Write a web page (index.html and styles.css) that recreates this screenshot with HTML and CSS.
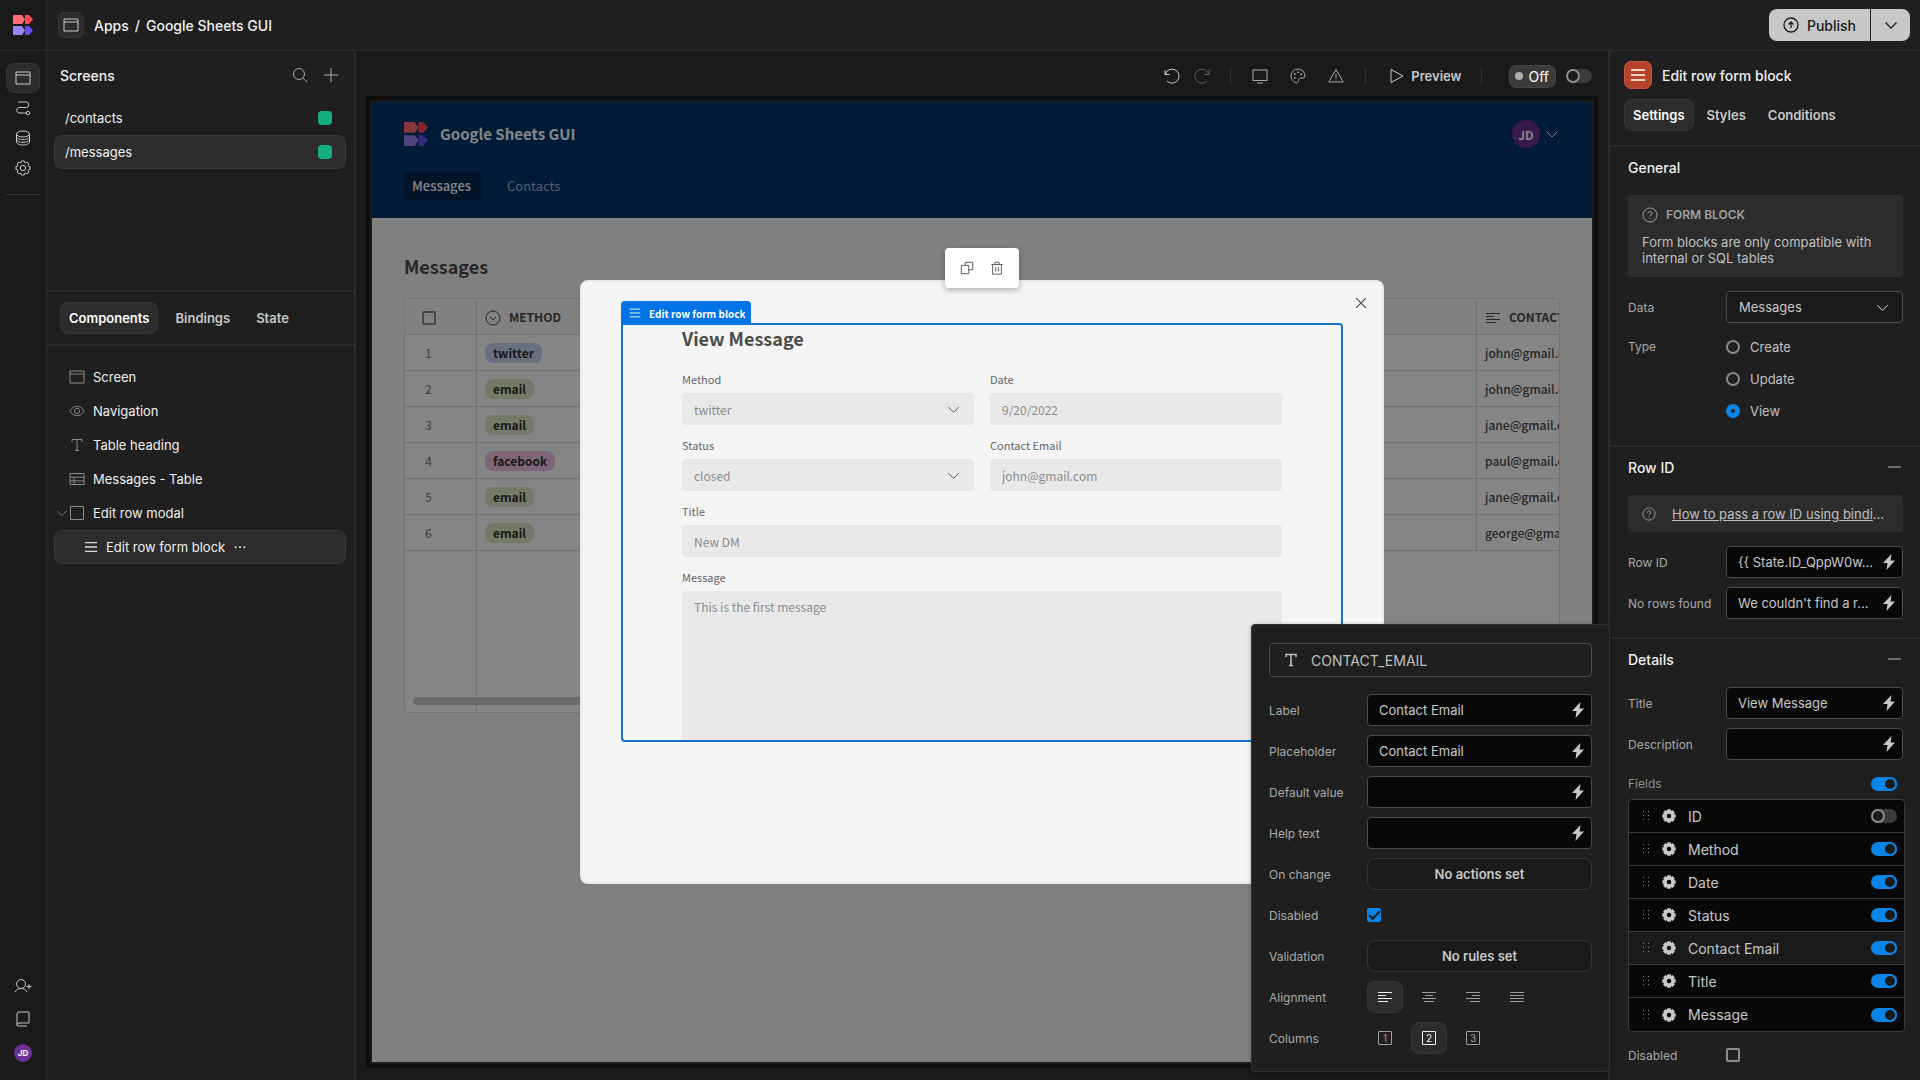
FILE: index.html
```html
<!DOCTYPE html>
<html lang="en">
<head>
  <meta charset="UTF-8">
  <meta name="viewport" content="width=device-width, initial-scale=1.0">
  <title>Google Sheets GUI</title>
  <link rel="stylesheet" href="styles.css">
</head>
<body>

  <!-- shared icons -->
  <svg class="sprite" aria-hidden="true">
    <symbol id="logo" viewBox="0 0 20 20">
      <path fill="#ff6d72" d="M0 0h9l3 4.500-3 4.500H0z"/>
      <path fill="#ff4a55" d="M12 0h4l4 4.500L16 9h-4z"/>
      <path fill="#9b83f5" d="M0 11h9l3 4.500L9 20H0z"/>
      <path fill="#6a4ff0" d="M12 11h4l4 4.500-4 4.500h-4z"/>
    </symbol>
    <symbol id="window" viewBox="0 0 16 16"><path d="M1 2h14v12H1zM1 5h14"/></symbol>
    <symbol id="flow" viewBox="0 0 16 16"><path d="M3 2h8.500a2.800 2.800 0 0 1 0 5.500H4a2.800 2.800 0 0 0 0 5.500h7"/><circle cx="13" cy="13" r="1.700"/></symbol>
    <symbol id="data" viewBox="0 0 16 16"><ellipse cx="8" cy="4" rx="6.500" ry="3"/><path d="M1.500 4v8c0 1.700 3 3 6.500 3s6.500-1.300 6.500-3V4M1.500 6.700c0 1.700 3 3 6.500 3s6.500-1.300 6.500-3M1.500 9.400c0 1.700 3 3 6.500 3s6.500-1.300 6.500-3"/></symbol>
    <symbol id="gear" viewBox="-8 -8 16 16">
      <path d="M7.090-1.250V1.250L5.550 1.700 5.120 2.720 5.900 4.130 4.130 5.900 2.720 5.120 1.700 5.550 1.250 7.090H-1.250L-1.700 5.550-2.720 5.120-4.130 5.900-5.900 4.130-5.120 2.720-5.550 1.700-7.090 1.250V-1.250L-5.550-1.700-5.120-2.720-5.900-4.130-4.130-5.900-2.720-5.120-1.700-5.550-1.250-7.090H1.250L1.700-5.550 2.720-5.120 4.130-5.900 5.900-4.130 5.120-2.720 5.550-1.700Z"/>
      <circle r="2.700"/>
    </symbol>
    <symbol id="gear-solid" viewBox="-8 -8 16 16">
      <path fill-rule="evenodd" d="M7.600-2V2L6.200 2.100 5.900 2.800 6.800 4 4 6.800 2.800 5.900 2.100 6.200 2 7.600H-2L-2.100 6.200-2.800 5.900-4 6.800-6.800 4-5.900 2.800-6.200 2.100-7.600 2V-2L-6.200-2.100-5.900-2.800-6.800-4-4-6.800-2.800-5.900-2.100-6.200-2-7.600H2L2.100-6.200 2.800-5.900 4-6.800 6.800-4 5.900-2.800 6.200-2.100ZM0-2.600A2.600 2.600 0 0 0 0 2.600 2.600 2.600 0 0 0 0-2.600Z"/>
    </symbol>
    <symbol id="user-add" viewBox="0 0 18 16"><circle cx="7" cy="6" r="4.500"/><path d="M1 14c1.300-2.200 3.500-3.500 6-3.500s4.700 1.300 6 3.500M15 6v5M12.500 8.500h5"/></symbol>
    <symbol id="book" viewBox="0 0 16 16"><path d="M2 14V3a2 2 0 0 1 2-2h10v11H4a2 2 0 0 0-2 2 1 1 0 0 0 1 1h9"/></symbol>
    <symbol id="search" viewBox="0 0 16 16"><circle cx="7" cy="7" r="5.500"/><path d="M11 11l4 4"/></symbol>
    <symbol id="plus" viewBox="0 0 16 16"><path d="M8 1v14M1 8h14"/></symbol>
    <symbol id="eye" viewBox="0 0 18 16"><path d="M1 8c2-3.500 4.800-5.300 8-5.300S15 4.500 17 8c-2 3.500-4.800 5.300-8 5.300S3 11.500 1 8z"/><circle cx="9" cy="8" r="3"/></symbol>
    <symbol id="type" viewBox="0 0 16 16"><path d="M3 5V2.500h10V5M8 2.500v11M6 13.500h4"/></symbol>
    <symbol id="table" viewBox="0 0 16 16"><path d="M1 2.500h14v11H1zM1 6.200h14M1 9.900h14M5 6.200v7.300"/></symbol>
    <symbol id="square" viewBox="0 0 16 16"><path d="M1.500 1.500h13v13h-13z"/></symbol>
    <symbol id="rows" viewBox="0 0 16 16"><path d="M1 3h14M1 8h14M1 13h14"/></symbol>
    <symbol id="chevron" viewBox="0 0 16 16"><path d="M2.500 5.500L8 11l5.500-5.500"/></symbol>
    <symbol id="dots" viewBox="0 0 16 16"><path class="solid" d="M2 7h2v2H2zM7 7h2v2H7zM12 7h2v2h-2z"/></symbol>
    <symbol id="undo" viewBox="0 0 16 16"><path d="M1 2v4.500h4.500M1.300 6.300A7 7 0 1 1 3 13"/></symbol>
    <symbol id="desktop" viewBox="0 0 16 16"><path d="M1 2h14v10.500H1zM5 15h6"/></symbol>
    <symbol id="palette" viewBox="0 0 16 16"><path d="M8 1a7 7 0 0 0-2 13.700c1.700.500 2.500-.700 2.500-2 0-1.700 1-2.700 2.500-2.700h2c1.300 0 2-.800 2-2A7 7 0 0 0 8 1z"/><path class="solid" d="M7.200 3.500h1.600v1.600H7.200zM4 5.300h1.600v1.600H4zM4 9h1.600v1.600H4zM10.500 5.300h1.600v1.600h-1.600z"/></symbol>
    <symbol id="warning" viewBox="0 0 16 16"><path d="M8 1.500L15.200 14H.8zM8 6v4.500M8 11.500v1"/></symbol>
    <symbol id="play" viewBox="0 0 16 16"><path d="M2 1.500v13L14 8z"/></symbol>
    <symbol id="upload" viewBox="0 0 16 16"><circle cx="8" cy="8" r="7"/><path d="M8 11V5M5.500 7.500L8 5l2.500 2.500"/></symbol>
    <symbol id="help" viewBox="0 0 16 16"><circle cx="8" cy="8" r="7"/><path d="M6 6.500a2 2 0 1 1 2.800 1.800c-.500.200-.8.500-.8 1.200M8 11v1.200"/></symbol>
    <symbol id="bolt" viewBox="0 0 16 16"><path d="M10.500 0L2 9h4.500l-1 7L14 6.500H9.500z"/></symbol>
    <symbol id="down-circle" viewBox="0 0 16 16"><circle cx="8" cy="8" r="7"/><path d="M5 7l3 3 3-3"/></symbol>
    <symbol id="align-left" viewBox="0 0 16 16"><path d="M1 3.500h14M1 6.500h8M1 9.500h14M1 12.500h10"/></symbol>
    <symbol id="align-center" viewBox="0 0 16 16"><path d="M1 3.500h14M4 6.500h8M1 9.500h14M3 12.500h10"/></symbol>
    <symbol id="align-right" viewBox="0 0 16 16"><path d="M1 3.500h14M7 6.500h8M1 9.500h14M5 12.500h10"/></symbol>
    <symbol id="align-justify" viewBox="0 0 16 16"><path d="M1 3.500h14M1 6.500h14M1 9.500h14M1 12.500h14"/></symbol>
    <symbol id="copy" viewBox="0 0 16 16"><path d="M6 5V1.500h8.500V10H10M1.500 5H10v9.500H1.500z"/></symbol>
    <symbol id="trash" viewBox="0 0 16 16"><path d="M1.500 4h13M3 4v11h10V4M5.500 4V1.500h5V4M6.500 7v5M9.500 7v5"/></symbol>
    <symbol id="close" viewBox="0 0 16 16"><path d="M1.500 1.500l13 13M14.500 1.500l-13 13"/></symbol>
    <symbol id="grip" viewBox="0 0 8 12"><path d="M1 1h1v1H1zM6 1h1v1H6zM1 5h1v1H1zM6 5h1v1H6zM1 9h1v1H1zM6 9h1v1H6z"/></symbol>
  </svg>

  <nav class="rail">
    <a href="#" class="rail-logo" aria-label="Home"><svg class="logo"><use href="#logo"/></svg></a>
    <div class="rail-items">
      <a href="#" class="rail-item active" aria-label="Design"><svg class="icon"><use href="#window"/></svg></a>
      <a href="#" class="rail-item" aria-label="Automations"><svg class="icon"><use href="#flow"/></svg></a>
      <a href="#" class="rail-item" aria-label="Data"><svg class="icon"><use href="#data"/></svg></a>
      <a href="#" class="rail-item" aria-label="Settings"><svg class="icon"><use href="#gear"/></svg></a>
    </div>
    <div class="rail-bottom">
      <a href="#" aria-label="Invite user"><svg class="icon wide"><use href="#user-add"/></svg></a>
      <a href="#" aria-label="Docs"><svg class="icon"><use href="#book"/></svg></a>
      <span class="avatar small">JD</span>
    </div>
  </nav>

  <div class="page">
    <header class="topbar">
      <span class="app-tile"><svg class="icon"><use href="#window"/></svg></span>
      <div class="crumbs">
        <a href="#">Apps</a>
        <span>/</span>
        <span>Google Sheets GUI</span>
      </div>
      <div class="publish">
        <button class="publish-main"><svg class="icon"><use href="#upload"/></svg>Publish</button>
        <button class="publish-more" aria-label="Publish options"><svg class="icon"><use href="#chevron"/></svg></button>
      </div>
    </header>

    <div class="builder">
      <aside class="left-panel">
        <section class="screens">
          <div class="panel-title">
            <h2>Screens</h2>
            <button class="icon-btn" aria-label="Search"><svg class="icon"><use href="#search"/></svg></button>
            <button class="icon-btn" aria-label="Add screen"><svg class="icon"><use href="#plus"/></svg></button>
          </div>
          <a href="#" class="screen-row">/contacts<span class="role"></span></a>
          <a href="#" class="screen-row selected">/messages<span class="role"></span></a>
        </section>
        <div class="tabs left-tabs">
          <button class="tab active">Components</button>
          <button class="tab">Bindings</button>
          <button class="tab">State</button>
        </div>
        <div class="tree">
          <a href="#" class="tree-row"><svg class="icon"><use href="#window"/></svg>Screen</a>
          <a href="#" class="tree-row"><svg class="icon"><use href="#eye"/></svg>Navigation</a>
          <a href="#" class="tree-row"><svg class="icon"><use href="#type"/></svg>Table heading</a>
          <a href="#" class="tree-row"><svg class="icon"><use href="#table"/></svg>Messages - Table</a>
          <a href="#" class="tree-row open"><svg class="icon arrow"><use href="#chevron"/></svg><svg class="icon"><use href="#square"/></svg>Edit row modal</a>
          <a href="#" class="tree-row child selected"><svg class="icon"><use href="#rows"/></svg>Edit row form block<svg class="icon"><use href="#dots"/></svg></a>
        </div>
      </aside>

      <main class="center">
        <div class="toolbar">
          <button class="tool" aria-label="Undo"><svg class="icon"><use href="#undo"/></svg></button>
          <button class="tool redo" aria-label="Redo" disabled><svg class="icon"><use href="#undo"/></svg></button>
          <span class="divider"></span>
          <button class="tool big" aria-label="Desktop"><svg class="icon"><use href="#desktop"/></svg></button>
          <button class="tool big" aria-label="Theme"><svg class="icon"><use href="#palette"/></svg></button>
          <button class="tool big" aria-label="Errors"><svg class="icon"><use href="#warning"/></svg></button>
          <span class="divider"></span>
          <button class="preview"><svg class="icon"><use href="#play"/></svg>Preview</button>
          <span class="divider"></span>
          <label class="off" for="live">Off</label>
          <input type="checkbox" class="switch" id="live">
        </div>

        <div class="frame">
          <div class="app">
            <header class="app-header">
              <div class="app-brand">
                <svg class="app-logo"><use href="#logo"/></svg>
                <h1>Google Sheets GUI</h1>
                <span class="avatar">JD</span>
                <svg class="icon"><use href="#chevron"/></svg>
              </div>
              <nav class="app-nav">
                <a href="#" class="current">Messages</a>
                <a href="#">Contacts</a>
              </nav>
            </header>
            <div class="app-body">
              <h2>Messages</h2>
              <div class="grid">
                <table>
                  <thead>
                    <tr>
                      <th class="num"><input type="checkbox" class="check" aria-label="Select all"></th>
                      <th class="method"><svg class="icon"><use href="#down-circle"/></svg>METHOD</th>
                      <th class="rest"></th>
                      <th class="contact"><svg class="icon"><use href="#align-left"/></svg>CONTACT_EMAIL</th>
                    </tr>
                  </thead>
                  <tbody>
                    <tr><td class="num">1</td><td><span class="tag blue">twitter</span></td><td></td><td>john@gmail.com</td></tr>
                    <tr><td class="num">2</td><td><span class="tag green">email</span></td><td></td><td>john@gmail.com</td></tr>
                    <tr><td class="num">3</td><td><span class="tag green">email</span></td><td></td><td>jane@gmail.com</td></tr>
                    <tr><td class="num">4</td><td><span class="tag pink">facebook</span></td><td></td><td>paul@gmail.com</td></tr>
                    <tr><td class="num">5</td><td><span class="tag green">email</span></td><td></td><td>jane@gmail.com</td></tr>
                    <tr><td class="num">6</td><td><span class="tag green">email</span></td><td></td><td>george@gmail.com</td></tr>
                  </tbody>
                </table>
                <div class="scrollbar"></div>
              </div>
            </div>
          </div>

          <div class="underlay">
            <div class="modal">
              <div class="float-bar">
                <button aria-label="Duplicate"><svg class="icon"><use href="#copy"/></svg></button>
                <button aria-label="Delete"><svg class="icon"><use href="#trash"/></svg></button>
              </div>
              <button class="modal-close" aria-label="Close"><svg class="icon"><use href="#close"/></svg></button>
              <div class="selection">
                <div class="selection-label"><svg class="icon"><use href="#rows"/></svg>Edit row form block</div>
                <form class="form">
                  <h3>View Message</h3>
                  <div class="field">
                    <label for="f-method">Method</label>
                    <div class="select">
                      <select id="f-method" disabled><option>twitter</option></select>
                      <svg class="icon"><use href="#chevron"/></svg>
                    </div>
                  </div>
                  <div class="field">
                    <label for="f-date">Date</label>
                    <input type="text" id="f-date" value="9/20/2022" disabled>
                  </div>
                  <div class="field">
                    <label for="f-status">Status</label>
                    <div class="select">
                      <select id="f-status" disabled><option>closed</option></select>
                      <svg class="icon"><use href="#chevron"/></svg>
                    </div>
                  </div>
                  <div class="field">
                    <label for="f-email">Contact Email</label>
                    <input type="text" id="f-email" value="john@gmail.com" disabled>
                  </div>
                  <div class="field full">
                    <label for="f-title">Title</label>
                    <input type="text" id="f-title" value="New DM" disabled>
                  </div>
                  <div class="field full">
                    <label for="f-message">Message</label>
                    <textarea id="f-message" disabled>This is the first message</textarea>
                  </div>
                </form>
              </div>
            </div>
          </div>
        </div>

        <div class="popover">
          <div class="field-name"><svg class="icon"><use href="#type"/></svg>CONTACT_EMAIL</div>
          <div class="prop">
            <label for="p-label">Label</label>
            <div class="bind"><input type="text" id="p-label" value="Contact Email"><svg class="icon"><use href="#bolt"/></svg></div>
          </div>
          <div class="prop">
            <label for="p-placeholder">Placeholder</label>
            <div class="bind"><input type="text" id="p-placeholder" value="Contact Email"><svg class="icon"><use href="#bolt"/></svg></div>
          </div>
          <div class="prop">
            <label for="p-default">Default value</label>
            <div class="bind"><input type="text" id="p-default"><svg class="icon"><use href="#bolt"/></svg></div>
          </div>
          <div class="prop">
            <label for="p-help">Help text</label>
            <div class="bind"><input type="text" id="p-help"><svg class="icon"><use href="#bolt"/></svg></div>
          </div>
          <div class="prop">
            <label for="p-change">On change</label>
            <button class="action" id="p-change">No actions set</button>
          </div>
          <div class="prop">
            <label for="p-disabled">Disabled</label>
            <input type="checkbox" class="check" id="p-disabled" checked>
          </div>
          <div class="prop">
            <label for="p-validation">Validation</label>
            <button class="action" id="p-validation">No rules set</button>
          </div>
          <div class="prop">
            <span class="prop-name">Alignment</span>
            <div class="choices">
              <button class="active" aria-label="Left"><svg class="icon"><use href="#align-left"/></svg></button>
              <button aria-label="Center"><svg class="icon"><use href="#align-center"/></svg></button>
              <button aria-label="Right"><svg class="icon"><use href="#align-right"/></svg></button>
              <button aria-label="Justify"><svg class="icon"><use href="#align-justify"/></svg></button>
            </div>
          </div>
          <div class="prop">
            <span class="prop-name">Columns</span>
            <div class="choices">
              <button><span class="digit">1</span></button>
              <button class="active"><span class="digit">2</span></button>
              <button><span class="digit">3</span></button>
            </div>
          </div>
        </div>
      </main>

      <aside class="right-panel">
        <div class="component-head">
          <div class="component-title">
            <span class="component-tile"><svg class="icon"><use href="#rows"/></svg></span>
            <h2>Edit row form block</h2>
          </div>
          <div class="tabs">
            <button class="tab active">Settings</button>
            <button class="tab">Styles</button>
            <button class="tab">Conditions</button>
          </div>
        </div>

        <section class="group">
          <h3>General</h3>
          <div class="info">
            <div class="info-title"><svg class="icon"><use href="#help"/></svg>FORM BLOCK</div>
            <p>Form blocks are only compatible with internal or SQL tables</p>
          </div>
          <div class="prop">
            <label for="s-data">Data</label>
            <div class="select">
              <select id="s-data"><option>Messages</option></select>
              <svg class="icon"><use href="#chevron"/></svg>
            </div>
          </div>
          <div class="prop radios-row">
            <span class="prop-name">Type</span>
            <div class="radios">
              <label><input type="radio" name="type">Create</label>
              <label><input type="radio" name="type">Update</label>
              <label><input type="radio" name="type" checked>View</label>
            </div>
          </div>
        </section>

        <section class="group">
          <h3>Row ID<span class="minus"></span></h3>
          <div class="info link"><svg class="icon"><use href="#help"/></svg><span><a href="#">How to pass a row ID using bindi</a>...</span></div>
          <div class="prop">
            <label for="s-row">Row ID</label>
            <div class="bind"><input type="text" id="s-row" value="{{ State.ID_QppW0w..."><svg class="icon"><use href="#bolt"/></svg></div>
          </div>
          <div class="prop">
            <label for="s-norows">No rows found</label>
            <div class="bind"><input type="text" id="s-norows" value="We couldn't find a r..."><svg class="icon"><use href="#bolt"/></svg></div>
          </div>
        </section>

        <section class="group">
          <h3>Details<span class="minus"></span></h3>
          <div class="prop">
            <label for="s-title">Title</label>
            <div class="bind"><input type="text" id="s-title" value="View Message"><svg class="icon"><use href="#bolt"/></svg></div>
          </div>
          <div class="prop">
            <label for="s-desc">Description</label>
            <div class="bind"><input type="text" id="s-desc"><svg class="icon"><use href="#bolt"/></svg></div>
          </div>
          <div class="fields-head"><label for="s-all">Fields</label><input type="checkbox" class="switch" id="s-all" checked></div>
          <ul class="fields">
            <li><svg class="grip"><use href="#grip"/></svg><svg class="icon"><use href="#gear-solid"/></svg><label for="c-id">ID</label><input type="checkbox" class="switch" id="c-id"></li>
            <li><svg class="grip"><use href="#grip"/></svg><svg class="icon"><use href="#gear-solid"/></svg><label for="c-method">Method</label><input type="checkbox" class="switch" id="c-method" checked></li>
            <li><svg class="grip"><use href="#grip"/></svg><svg class="icon"><use href="#gear-solid"/></svg><label for="c-date">Date</label><input type="checkbox" class="switch" id="c-date" checked></li>
            <li><svg class="grip"><use href="#grip"/></svg><svg class="icon"><use href="#gear-solid"/></svg><label for="c-status">Status</label><input type="checkbox" class="switch" id="c-status" checked></li>
            <li class="current"><svg class="grip"><use href="#grip"/></svg><svg class="icon"><use href="#gear-solid"/></svg><label for="c-email">Contact Email</label><input type="checkbox" class="switch" id="c-email" checked></li>
            <li><svg class="grip"><use href="#grip"/></svg><svg class="icon"><use href="#gear-solid"/></svg><label for="c-title">Title</label><input type="checkbox" class="switch" id="c-title" checked></li>
            <li><svg class="grip"><use href="#grip"/></svg><svg class="icon"><use href="#gear-solid"/></svg><label for="c-message">Message</label><input type="checkbox" class="switch" id="c-message" checked></li>
          </ul>
          <div class="prop">
            <label for="s-disabled">Disabled</label>
            <input type="checkbox" class="check" id="s-disabled">
          </div>
        </section>
      </aside>
    </div>
  </div>

</body>
</html>
```

FILE: styles.css
```css
*,
*::before {
  box-sizing: border-box;
}

body {
  margin: 0;
  height: 100vh;
  display: flex;
  overflow: hidden;
  background: #1f1f1f;
  color: #f0f0f0;
  font-family: Inter, sans-serif;
  font-size: 13px;
}

h1, h2, h3, p, ul {
  margin: 0;
  padding: 0;
}

a {
  color: inherit;
  text-decoration: none;
}

button, input, select, textarea {
  font: inherit;
  color: inherit;
}

button {
  margin: 0;
  padding: 0;
  border: none;
  background: none;
  display: flex;
  align-items: center;
  justify-content: center;
  cursor: pointer;
}

.sprite {
  position: absolute;
  width: 0;
  height: 0;
}

.icon {
  width: 16px;
  height: 16px;
  flex: none;
  fill: none;
  stroke: currentColor;
  stroke-width: 1;
}

.icon.wide {
  width: 18px;
}

.solid {
  fill: currentColor;
  stroke: none;
}

.avatar {
  width: 28px;
  height: 28px;
  border-radius: 50%;
  background: #6a3093;
  color: #fff;
  font-size: 12px;
  font-weight: 700;
  display: flex;
  align-items: center;
  justify-content: center;
}

.avatar.small {
  width: 18px;
  height: 18px;
  font-size: 8px;
}

/* Left rail */
.rail {
  width: 47px;
  flex: none;
  display: flex;
  flex-direction: column;
  background: #1a1a1a;
  border-right: 1px solid #2c2c2c;
  color: #c8c8c8;
}

.rail-logo {
  height: 51px;
  display: flex;
  align-items: center;
  justify-content: center;
  border-bottom: 1px solid #2c2c2c;
}

.logo {
  width: 20px;
  height: 20px;
}

.rail-items {
  margin: 12px 6px 0;
  padding-bottom: 11px;
  border-bottom: 1px solid #323232;
}

.rail-item {
  height: 30px;
  display: flex;
  align-items: center;
  justify-content: center;
}

.rail-item.active {
  background: #2c2c2c;
  border: 1px solid #363636;
  border-radius: 8px;
}

.rail-bottom {
  margin-top: auto;
  padding-bottom: 18px;
  display: flex;
  flex-direction: column;
  align-items: center;
  gap: 17px;
}

.rail-bottom a {
  display: flex;
}

/* Top bar */
.page {
  flex: 1;
  min-width: 0;
  display: flex;
  flex-direction: column;
}

.topbar {
  height: 51px;
  flex: none;
  display: flex;
  align-items: center;
  gap: 10px;
  padding: 0 10px 0 11px;
  border-bottom: 1px solid #2c2c2c;
}

.app-tile {
  width: 26px;
  height: 26px;
  display: flex;
  align-items: center;
  justify-content: center;
  background: #2c2c2c;
  border: 1px solid #363636;
  border-radius: 6px;
  color: #c8c8c8;
}

.crumbs {
  flex: 1;
  display: flex;
  gap: 6px;
  font-size: 14px;
  font-weight: 500;
}

.publish {
  display: flex;
  height: 32px;
  gap: 1px;
  color: #1a1a1a;
  font-size: 14px;
  font-weight: 500;
}

.publish button {
  background: #c8c8c8;
}

.publish-main {
  gap: 8px;
  padding: 0 14px;
  border-radius: 8px 0 0 8px;
}

.publish .publish-more {
  width: 39px;
  border-radius: 0 8px 8px 0;
}

.publish .icon {
  stroke-width: 1.3;
}

/* Left panel */
.builder {
  flex: 1;
  min-height: 0;
  display: flex;
}

.left-panel {
  width: 309px;
  flex: none;
  border-right: 2px solid #2c2c2c;
}

.screens {
  height: 241px;
  padding: 0 8px 0 7px;
  border-bottom: 2px solid #2c2c2c;
}

.panel-title {
  height: 50px;
  display: flex;
  align-items: center;
  gap: 15px;
  padding: 0 7px 2px 6px;
}

.panel-title h2 {
  flex: 1;
  font-size: 14px;
  font-weight: 500;
}

.icon-btn {
  color: #a8a8a8;
}

.screen-row,
.tree-row {
  height: 34px;
  display: flex;
  align-items: center;
  border: 1px solid transparent;
  border-radius: 8px;
}

.screen-row {
  justify-content: space-between;
  padding: 0 13px 0 10px;
}

.selected {
  background: #2c2c2c;
  border-color: #383838;
}

.role {
  width: 14px;
  height: 14px;
  border-radius: 4px;
  background: #14ae82;
}

.tabs {
  display: flex;
  gap: 4px;
}

.tab {
  height: 32px;
  padding: 0 8px;
  border: 1px solid transparent;
  border-radius: 8px;
  color: #c8c8c8;
  font-weight: 600;
}

.tab.active {
  background: #2c2c2c;
  border-color: #363636;
  color: #fff;
}

.left-tabs {
  gap: 8px;
  padding: 10px 13px;
  border-bottom: 2px solid #2c2c2c;
}

.tree {
  padding: 14px 8px 14px 7px;
}

.tree-row {
  gap: 8px;
  padding-left: 14px;
}

.tree-row .icon {
  color: #8c8c8c;
}

.tree-row.open {
  padding-left: 0;
}

.tree-row .arrow {
  width: 14px;
  margin-right: -8px;
}

.tree-row.child {
  padding-left: 29px;
}

.tree-row.child .icon {
  width: 14px;
  height: 14px;
  color: #d8d8d8;
}

.tree-row.child .icon:first-child {
  stroke-width: 1.5;
}

/* Canvas */
.center {
  flex: 1;
  min-width: 0;
  position: relative;
  display: flex;
  flex-direction: column;
  background: #1a1a1a;
}

.toolbar {
  height: 45px;
  flex: none;
  display: flex;
  align-items: center;
  justify-content: flex-end;
  padding: 5px 16px 0 0;
  color: #a8a8a8;
}

.tool {
  width: 30px;
  height: 30px;
}

.tool.big {
  width: 38px;
}

.tool:first-child {
  color: #d0d0d0;
}

.tool.redo {
  margin-right: 3px;
  color: #5c5c5c;
}

.redo .icon {
  transform: scaleX(-1);
}

.divider {
  width: 1px;
  height: 18px;
  margin: 0 10px;
  background: #303030;
}

.preview {
  gap: 6px;
  padding: 0 10px 0 13px;
  font-weight: 600;
  color: #c8c8c8;
}

.off {
  display: flex;
  align-items: center;
  gap: 5px;
  height: 23px;
  margin: 0 10px 0 17px;
  padding: 0 6px 0 5px;
  background: #3a3a3a;
  border: 1px solid #444;
  border-radius: 7px;
  color: #fff;
  font-size: 14px;
}

.off::before {
  content: "";
  width: 8px;
  height: 8px;
  border-radius: 50%;
  background: #b0b0b0;
}

.switch {
  appearance: none;
  width: 26px;
  height: 14px;
  margin: 0;
  flex: none;
  display: flex;
  border-radius: 7px;
  background: #3c3c3c;
}

.switch::before {
  content: "";
  width: 14px;
  height: 14px;
  border: 2px solid #8c8c8c;
  border-radius: 50%;
  background: #1a1a1a;
}

.switch:checked {
  justify-content: flex-end;
  background: #0a84e6;
}

.switch:checked::before {
  border-color: #0a84e6;
}

.check {
  appearance: none;
  width: 14px;
  height: 14px;
  margin: 0;
  flex: none;
  border: 2px solid #8c8c8c;
  border-radius: 2px;
}

.check:checked {
  border: none;
  background: #0a84e6;
}

.check:checked::before {
  content: "";
  display: block;
  width: 11px;
  height: 6px;
  margin: 3px 0 0 2px;
  border: solid #14141c;
  border-width: 0 0 2px 2px;
  transform: rotate(-45deg);
}

.frame {
  flex: 1;
  min-height: 0;
  margin: 0 10px 12px;
  border: 4px solid #0d0d0d;
  padding: 2px;
  position: relative;
  background: #1a1a1a;
  font-family: "Noto Sans CJK SC", "Noto Sans", sans-serif;
}

.app {
  height: 100%;
  overflow: hidden;
  background: #f5f5f5;
  color: #4b4b4b;
}

.app-header {
  height: 116px;
  padding: 18px 32px 0;
  background: #00346c;
  color: #fff;
}

.app-brand {
  display: flex;
  align-items: center;
  height: 28px;
}

.app-logo {
  width: 24px;
  height: 24px;
}

.app-brand h1 {
  flex: 1;
  margin-left: 12px;
  font-size: 15px;
  font-weight: 700;
  line-height: 26px;
}

.app-brand .icon {
  margin-left: 4px;
}

.app-nav {
  display: flex;
  gap: 17px;
  margin-top: 24px;
}

.app-nav a {
  height: 28px;
  padding: 0 11px 0 8px;
  border-radius: 4px;
  line-height: 28px;
  font-size: 13px;
  color: #a8b8c8;
}

.app-nav .current {
  background: #002650;
  color: #fff;
  font-weight: 500;
}

.app-body {
  padding: 32px;
}

.app-body h2 {
  height: 48px;
  line-height: 32px;
  font-size: 18px;
}

.grid {
  position: relative;
  height: 415px;
  overflow: hidden;
  border: 1px solid #dedede;
  border-radius: 4px;
  background: linear-gradient(90deg, transparent 71px, #d8d8d8 71px, #d8d8d8 72px, transparent 72px) #fff;
}

.grid table {
  table-layout: fixed;
  width: 1272px;
  border-collapse: separate;
  border-spacing: 0;
}

.grid th,
.grid td {
  height: 36px;
  padding: 0 8px;
  border-bottom: 1px solid #d8d8d8;
  border-right: 1px solid #d8d8d8;
  text-align: left;
  line-height: 20px;
  font-size: 12px;
  font-weight: 500;
}

.grid th {
  background: #f8f8f8;
  font-weight: 700;
}

.grid th .icon {
  margin-right: 8px;
  vertical-align: middle;
}

.grid .num {
  width: 72px;
  padding-right: 32px;
  text-align: center;
  color: #8c8c8c;
}

.grid .method {
  width: 200px;
}

.grid .rest {
  width: 800px;
}

.grid .num .check {
  display: inline-block;
  vertical-align: middle;
}

.tag {
  display: inline-block;
  height: 20px;
  padding: 0 8px;
  border-radius: 8px;
  color: #323232;
  font-weight: 700;
}

.tag.blue {
  background: #c8d6f5;
}

.tag.green {
  background: #dfe9c8;
}

.tag.pink {
  background: #f0c3e6;
}

.scrollbar {
  position: absolute;
  left: 8px;
  bottom: 7px;
  width: 90%;
  height: 8px;
  border-radius: 4px;
  background: #cacaca;
}

/* Modal over the app */
.underlay {
  position: absolute;
  inset: 2px;
  display: flex;
  align-items: center;
  justify-content: center;
  background: rgba(0, 0, 0, 0.48);
}

.modal {
  position: relative;
  width: 100%;
  max-width: 804px;
  padding: 41px 39px 140px;
  border: 2px solid #ebebeb;
  border-radius: 8px;
  background: #f5f5f5;
  color: #4b4b4b;
}

.modal-close {
  position: absolute;
  top: 15px;
  right: 15px;
}

.modal-close .icon {
  width: 12px;
  height: 12px;
  stroke-width: 1.5;
}

.float-bar {
  position: absolute;
  top: -34px;
  left: 50%;
  margin-left: -37px;
  width: 74px;
  height: 40px;
  display: flex;
  align-items: center;
  justify-content: center;
  gap: 16px;
  border-radius: 4px;
  background: #fff;
  box-shadow: 0 2px 6px rgba(0, 0, 0, 0.3);
}

.float-bar .icon {
  width: 14px;
  height: 14px;
}

.selection {
  position: relative;
  border: 2px solid #1473c8;
  border-radius: 0 4px 4px 4px;
  padding: 0 59px;
}

.selection-label {
  position: absolute;
  left: -2px;
  bottom: 100%;
  height: 24px;
  display: flex;
  align-items: center;
  gap: 8px;
  padding: 0 5px 0 8px;
  border-radius: 4px 4px 0 0;
  background: #0073e6;
  color: #fff;
  font-size: 10px;
  font-weight: 700;
}

.selection-label .icon {
  width: 12px;
  height: 12px;
  stroke-width: 2;
  opacity: 0.6;
}

.form {
  display: grid;
  grid-template-columns: 1fr 1fr;
  column-gap: 16px;
}

.form h3 {
  grid-column: 1 / -1;
  height: 42px;
  line-height: 26px;
  font-size: 18px;
}

.field {
  display: flex;
  flex-direction: column;
  padding-bottom: 8px;
}

.field.full {
  grid-column: 1 / -1;
}

.field:last-child {
  padding-bottom: 0;
}

.field label {
  height: 26px;
  line-height: 24px;
  font-size: 11px;
  color: #666;
}

.field input,
.field textarea,
.field select {
  width: 100%;
  height: 32px;
  padding: 0 12px;
  border: none;
  border-radius: 4px;
  background: #e9e9e9;
  color: #8c8c8c;
  font-size: 12px;
  opacity: 1;
}

.field textarea {
  height: 149px;
  padding: 6px 12px;
  line-height: 20px;
  resize: none;
  display: block;
}

.select {
  flex: 1;
  position: relative;
}

.select select {
  appearance: none;
  display: block;
}

.select .icon {
  position: absolute;
  top: 9px;
  right: 13px;
  width: 15px;
  height: 15px;
  pointer-events: none;
}

/* Settings rows, used by the popover and the right panel */
.prop {
  display: flex;
  align-items: center;
  min-height: 32px;
}

.prop + .prop {
  margin-top: 9px;
}

.prop > label,
.prop-name {
  width: 98px;
  flex: none;
  font-size: 12px;
  color: #a8a8a8;
}

.bind {
  flex: 1;
  min-width: 0;
  display: flex;
  align-items: center;
  height: 32px;
  padding: 0 5px 0 11px;
  border: 1px solid #4b4b4b;
  border-radius: 4px;
  background: #080808;
  color: #c8c8c8;
}

.bind input {
  flex: 1;
  min-width: 0;
  padding: 0;
  border: none;
  outline: none;
  background: none;
}

.bind .icon {
  fill: currentColor;
  stroke: none;
}

.action {
  flex: 1;
  height: 32px;
  border: 1px solid #363636;
  border-radius: 8px;
  background: #1a1a1a;
  color: #c8c8c8;
  font-weight: 600;
}

.popover {
  position: absolute;
  right: -2px;
  bottom: 8px;
  z-index: 2;
  width: 359px;
  padding: 18px 17px 17px;
  border: 1px solid #323232;
  border-radius: 4px;
  background: #1f1f1f;
  box-shadow: 0 1px 4px rgba(0, 0, 0, 0.3);
}

.field-name {
  height: 34px;
  display: flex;
  align-items: center;
  gap: 12px;
  margin-bottom: 17px;
  padding: 0 13px;
  border: 1px solid #4b4b4b;
  border-radius: 4px;
  color: #c0c0c0;
  font-size: 14px;
}

.field-name .icon {
  stroke-width: 1.5;
}

.choices {
  display: flex;
  gap: 8px;
}

.choices button {
  width: 36px;
  height: 32px;
  border: 1px solid transparent;
  border-radius: 8px;
  color: #a0a0a0;
}

.choices .active {
  background: #2c2c2c;
  border-color: #363636;
  color: #f0f0f0;
}

.digit {
  width: 14px;
  height: 14px;
  border: 1px solid currentColor;
  border-radius: 1px;
  line-height: 12px;
  font-size: 10px;
}

/* Right panel */
.right-panel {
  width: 312px;
  flex: none;
  border-left: 2px solid #2c2c2c;
}

.component-head {
  padding: 10px 14px 14px;
  border-bottom: 2px solid #2c2c2c;
}

.component-title {
  display: flex;
  align-items: center;
  gap: 10px;
  margin-bottom: 10px;
}

.component-title h2 {
  font-size: 14px;
  font-weight: 500;
}

.component-tile {
  width: 28px;
  height: 28px;
  display: flex;
  align-items: center;
  justify-content: center;
  border: 1px solid #c4553a;
  border-radius: 7px;
  background: #b5432a;
  color: #fff;
}

.component-tile .icon {
  stroke-width: 1.5;
}

.group {
  padding: 0 17px 18px 18px;
  border-bottom: 2px solid #2c2c2c;
}

.group:last-child {
  border-bottom: none;
}

.group h3 {
  height: 48px;
  padding-bottom: 8px;
  display: flex;
  align-items: center;
  justify-content: space-between;
  font-size: 14px;
  font-weight: 500;
}

.minus {
  width: 13px;
  height: 2px;
  margin-right: 2px;
  background: #6e6e6e;
}

.info {
  margin-bottom: 14px;
  padding: 11px 14px;
  border-radius: 4px;
  background: #2c2c2c;
  color: #c0c0c0;
  line-height: 16px;
}

.info-title {
  display: flex;
  align-items: center;
  gap: 8px;
  height: 18px;
  margin-bottom: 10px;
  font-size: 12px;
  font-weight: 600;
  color: #a0a0a0;
}

.info.link {
  display: flex;
  align-items: center;
  gap: 16px;
  height: 37px;
  padding: 0 14px;
}

.info.link .icon {
  width: 14px;
  height: 14px;
  color: #a0a0a0;
}

.info a {
  text-decoration: underline;
}

.group .select select {
  width: 100%;
  height: 32px;
  padding: 0 12px;
  border: 1px solid #4b4b4b;
  border-radius: 4px;
  background: #1a1a1a;
  color: #c8c8c8;
}

.group .prop.radios-row {
  align-items: flex-start;
  margin-top: 8px;
}

.radios-row .prop-name {
  line-height: 32px;
}

.radios label {
  height: 32px;
  display: flex;
  align-items: center;
  gap: 10px;
  color: #c0c0c0;
}

.radios input {
  appearance: none;
  width: 14px;
  height: 14px;
  margin: 0;
  border: 2px solid #8c8c8c;
  border-radius: 50%;
}

.radios input:checked {
  border: 5px solid #0a84e6;
}

.fields-head {
  display: flex;
  align-items: center;
  justify-content: space-between;
  height: 39px;
  padding: 8px 6px 0 0;
  font-size: 12px;
  color: #8c8c8c;
}

.fields {
  margin: 0 -2px 7px 0;
  border: 1px solid #3c3c3c;
  border-radius: 4px;
  background: #080808;
  list-style: none;
  overflow: hidden;
}

.fields li {
  height: 33px;
  display: flex;
  align-items: center;
  padding: 0 7px 0 13px;
  border-bottom: 1px solid #3c3c3c;
  color: #c8c8c8;
  font-size: 14px;
}

.fields li:last-child {
  border-bottom: none;
}

.fields .current {
  background: #1a1a1a;
}

.fields label {
  flex: 1;
  margin-left: 12px;
}

.fields .icon {
  width: 14px;
  height: 14px;
  margin-left: 12px;
  fill: currentColor;
  stroke: none;
}

.grip {
  width: 8px;
  height: 12px;
  fill: #8c8c8c;
}
```
